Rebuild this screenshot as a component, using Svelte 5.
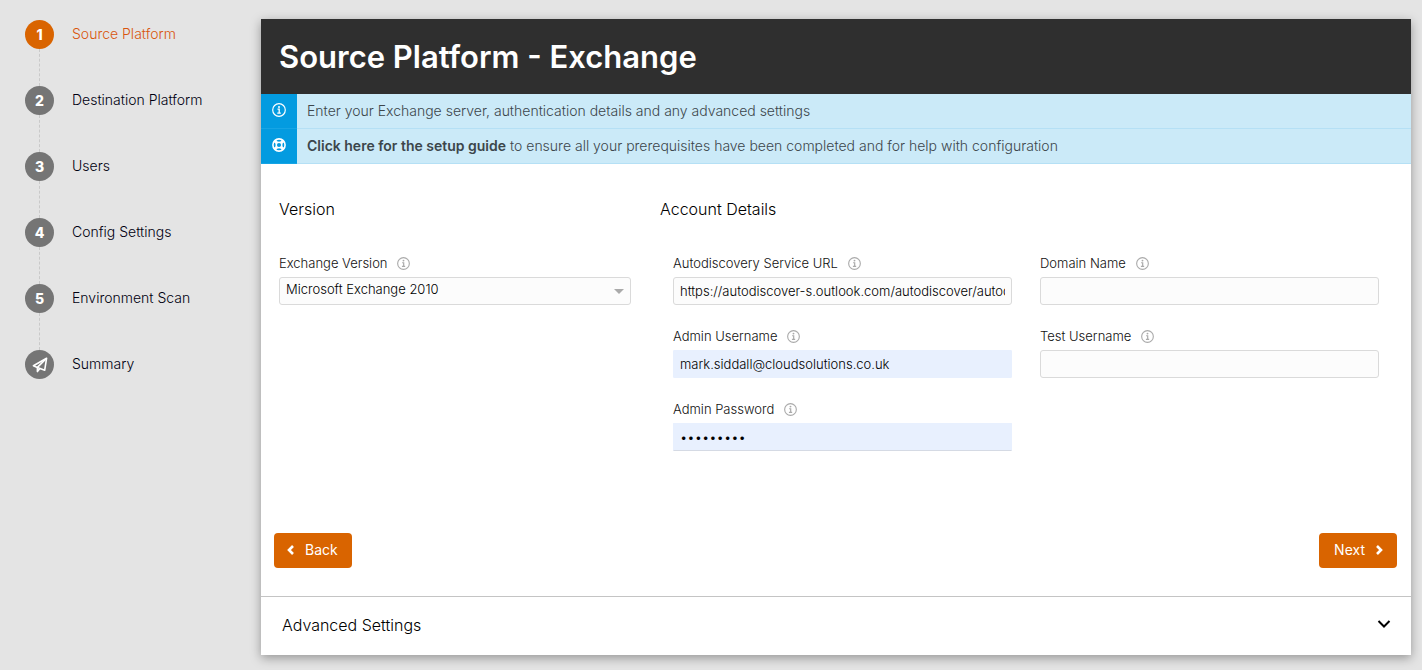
<script>
  const steps = ['Source Platform', 'Destination Platform', 'Users', 'Config Settings', 'Environment Scan', 'Summary'];
  const current = 0;

  let version = $state('Microsoft Exchange 2010');
  const versions = ['Microsoft Exchange 2010', 'Microsoft Exchange 2013', 'Microsoft Exchange 2016'];

  let fields = $state([
    { id: 'url', label: 'Autodiscovery Service URL', type: 'text', value: 'https://autodiscover-s.outlook.com/autodiscover/autodiscover.svc' },
    { id: 'domain', label: 'Domain Name', type: 'text', value: '' },
    { id: 'username', label: 'Admin Username', type: 'text', value: 'mark.siddall@cloudsolutions.co.uk', filled: true },
    { id: 'test', label: 'Test Username', type: 'text', value: '' },
    { id: 'password', label: 'Admin Password', type: 'password', value: 'exchange1', filled: true }
  ]);
</script>

{#snippet info(size)}
  <svg class="info" width={size} height={size} viewBox="0 0 14 14" fill="none" stroke="currentColor" aria-hidden="true">
    <circle cx="7" cy="7" r="6.3" stroke-width="1.2" />
    <path d="M5.5 6.2H7.2V10M5.3 10.1H8.8" stroke-width="1.3" />
    <circle cx="7" cy="3.9" r="1" fill="currentColor" stroke="none" />
  </svg>
{/snippet}

<div class="page">
  <nav aria-label="Steps">
    <ol>
      {#each steps as step, i}
        <li>
          <a href="#step-{i + 1}" class:current={i === current}>
            <span class="badge">
              {#if i < steps.length - 1}
                {i + 1}
              {:else}
                <svg width="16" height="16" viewBox="0 0 16 16" fill="none" stroke="currentColor" stroke-width="1.6" stroke-linejoin="round" aria-hidden="true">
                  <path d="M14.6 1.2 1.4 8.7 4.8 10.3 12.7 13.2Z" />
                  <path d="M14.6 1.2 5.4 10.4V14.6L7.9 11.6" />
                </svg>
              {/if}
            </span>
            <span class="name">{step}</span>
          </a>
        </li>
      {/each}
    </ol>
  </nav>

  <main>
    <header><h1>Source Platform - Exchange</h1></header>

    <div class="note">
      <span class="tag">{@render info(14)}</span>
      <p>Enter your Exchange server, authentication details and any advanced settings</p>
    </div>
    <div class="note">
      <span class="tag">
        <svg width="14" height="14" viewBox="0 0 14 14" fill="none" stroke="currentColor" aria-hidden="true">
          <circle cx="7" cy="7" r="6.1" stroke-width="1.6" />
          <circle cx="7" cy="7" r="2.8" stroke-width="1.5" />
          <path d="M2.6 2.6 5 5M11.4 2.6 9 5M2.6 11.4 5 9M11.4 11.4 9 9" stroke-width="3" />
        </svg>
      </span>
      <p><a href="#guide">Click here for the setup guide</a> to ensure all your prerequisites have been completed and for help with configuration</p>
    </div>

    <form onsubmit={(e) => e.preventDefault()}>
      <div class="columns">
        <section>
          <h2>Version</h2>
          <div class="field">
            <label for="version">Exchange Version {@render info(13)}</label>
            <div class="select">
              <select id="version" bind:value={version}>
                {#each versions as v}<option>{v}</option>{/each}
              </select>
            </div>
          </div>
        </section>
        <section>
          <h2>Account Details</h2>
          <div class="fields">
            {#each fields as f}
              <div class="field">
                <label for={f.id}>{f.label} {@render info(13)}</label>
                <input id={f.id} type={f.type} class:filled={f.filled} bind:value={f.value} />
              </div>
            {/each}
          </div>
        </section>
      </div>

      <div class="actions">
        <button type="button">
          <svg width="8" height="10" viewBox="0 0 8 10" fill="none" stroke="currentColor" stroke-width="2.6" aria-hidden="true"><path d="M6 1 2 5 6 9" /></svg>
          Back
        </button>
        <button type="submit">
          Next
          <svg width="8" height="10" viewBox="0 0 8 10" fill="none" stroke="currentColor" stroke-width="2.6" aria-hidden="true"><path d="M2 1 6 5 2 9" /></svg>
        </button>
      </div>
    </form>

    <button class="advanced" type="button" aria-expanded="false">
      Advanced Settings
      <svg width="14" height="10" viewBox="0 0 14 10" fill="none" stroke="currentColor" stroke-width="2" aria-hidden="true"><path d="M1.5 1 7 6.5 12.5 1" /></svg>
    </button>
  </main>
</div>

<style>
  :global(body) {
    margin: 0;
    background: #e4e4e4;
  }
  .page {
    display: grid;
    grid-template-columns: 236px minmax(0, 1fr);
    align-items: start;
    padding: 19px 11px 15px 25px;
    font: 300 14px/20px Inter, sans-serif;
    color: #000;
  }
  ol {
    display: flex;
    flex-direction: column;
    margin: 0;
    padding: 1px 0 0;
    list-style: none;
  }
  li:not(:last-child)::after {
    content: '';
    display: block;
    height: 37px;
    margin-left: 14px;
    border-left: 1px dashed #c9c9c9;
  }
  nav a {
    display: flex;
    align-items: center;
    gap: 18px;
    color: #000010;
    text-decoration: none;
  }
  nav a.current {
    color: #d9560c;
  }
  .name {
    padding-bottom: 2px;
  }
  .badge {
    display: flex;
    align-items: center;
    justify-content: center;
    width: 29px;
    height: 29px;
    border-radius: 50%;
    background: #757575;
    color: #fff;
    font-weight: 800;
  }
  .current .badge {
    background: #d96400;
  }
  main {
    background: #fff;
    box-shadow: 0 3px 10px rgba(0, 0, 0, 0.35);
  }
  header {
    padding: 18px;
    background: #2f2f2f;
    color: #fff;
  }
  h1 {
    margin: 0;
    font-size: 31px;
    line-height: 39px;
    font-weight: 600;
  }
  .note {
    display: flex;
    background: #cbeaf8;
    color: #3c464b;
  }
  .note p {
    flex: 1;
    margin: 0;
    padding: 7px 10px;
    border-bottom: 1px solid #b5e0f5;
  }
  .note a {
    color: inherit;
    font-weight: 600;
    text-decoration: none;
  }
  .tag {
    display: flex;
    align-items: center;
    justify-content: center;
    width: 36px;
    padding-bottom: 2px;
    box-sizing: border-box;
    background: #039be0;
    border-bottom: 1px solid #16a4e4;
    color: #fff;
  }
  form {
    padding: 35px 14px 28px 13px;
  }
  .columns {
    display: grid;
    grid-template-columns: 352fr 719fr;
    gap: 29px;
    padding: 0 18px 0 5px;
  }
  h2 {
    margin: 0 0 34px;
    font-size: 16px;
    line-height: 20px;
    font-weight: 300;
  }
  .fields {
    display: grid;
    grid-template-columns: 1fr 1fr;
    gap: 21px 28px;
    padding-left: 13px;
  }
  label {
    display: flex;
    align-items: center;
    gap: 10px;
    height: 20px;
    padding-bottom: 4px;
    font-size: 13px;
    color: #111;
  }
  label .info {
    color: #aaa;
  }
  input,
  select {
    display: block;
    width: 100%;
    height: 28px;
    box-sizing: border-box;
    padding: 0 6px;
    border: 1px solid #dadada;
    border-radius: 3px;
    background: #fcfcfc;
    color: #000;
    font: 300 13px Inter, sans-serif;
  }
  .filled {
    background: #e8f0fe;
    border-color: #e8f0fe;
    border-radius: 1px;
  }
  .filled[type='password'] {
    border-bottom-color: #d5dae4;
  }
  .select {
    display: grid;
    align-items: center;
  }
  .select > select,
  .select::after {
    grid-area: 1 / 1;
  }
  .select::after {
    content: '';
    justify-self: end;
    margin-right: 7px;
    border: 5px solid transparent;
    border-top-color: #aaa;
    border-bottom: 0;
    pointer-events: none;
  }
  select {
    appearance: none;
    padding-bottom: 4px;
  }
  .actions {
    display: flex;
    justify-content: space-between;
    margin-top: 82px;
  }
  .actions button {
    display: flex;
    align-items: center;
    gap: 10px;
    padding: 7px 14px 9px 13px;
    border: 0;
    border-radius: 4px;
    background: #d96400;
    color: #fff;
    font: 400 14px/19px Inter, sans-serif;
  }
  .actions button:last-child {
    padding-left: 15px;
  }
  .advanced {
    display: flex;
    align-items: center;
    justify-content: space-between;
    width: 100%;
    padding: 18px 20px 20px 21px;
    border: 0;
    border-top: 1px solid #c4c4c4;
    background: #fff;
    color: #000;
    font: 300 16px/20px Inter, sans-serif;
  }
</style>
